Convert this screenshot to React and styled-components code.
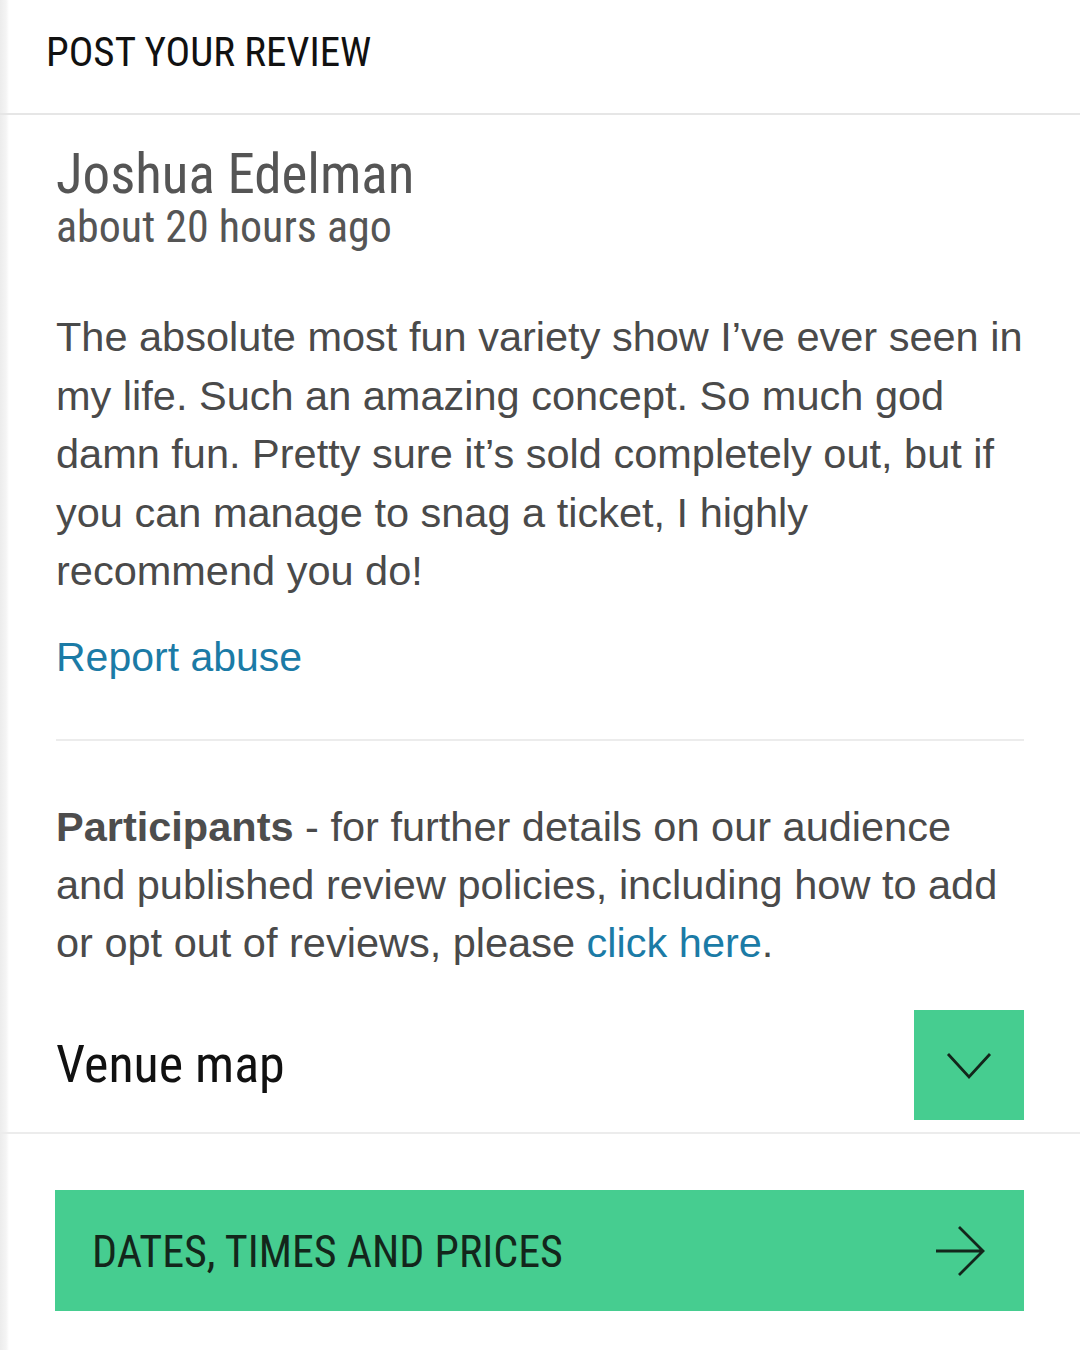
import React from "react";
import styled, { createGlobalStyle } from "styled-components";

const Global = createGlobalStyle`
  html, body { margin: 0; padding: 0; background: #ffffff; }
  body { width: 1080px; }
`;

const Page = styled.div`
  width: 1080px;
  min-height: 1350px;
  background: linear-gradient(to right, #ececec 0px, #f4f4f4 6px, #ffffff 9px);
  box-sizing: border-box;
`;

const Cond = styled.span`
  font-family: Roboto, "Liberation Sans", sans-serif;
  font-stretch: 75%;
`;

const Header = styled.header`
  height: 115px;
  display: flex;
  align-items: center;
  padding-left: 46px;
  padding-bottom: 10px;
  box-sizing: border-box;
  border-bottom: 2px solid #e6e6e6;
`;

const HeaderTitle = styled(Cond)`
  font-size: 41px;
  color: #111;
`;

const Section = styled.section`
  padding: 0 56px;
`;

const Name = styled(Cond)`
  display: block;
  margin-top: 30px;
  font-size: 55px;
  line-height: 58px;
  color: #555;
`;

const Time = styled(Cond)`
  display: block;
  font-size: 44px;
  line-height: 48px;
  color: #555;
`;

const Body = styled.p`
  margin: 57px 0 0;
  font-family: "Liberation Sans", Arial, sans-serif;
  font-size: 41.5px;
  line-height: 58.5px;
  color: #4a4a4a;
`;

const Link = styled.a`
  color: #1b7ba6;
  text-decoration: none;
`;

const ReportLine = styled.div`
  margin-top: 27px;
  font-family: "Liberation Sans", Arial, sans-serif;
  font-size: 41px;
  line-height: 58px;
`;

const Rule = styled.hr`
  margin: 53px 0 0;
  border: 0;
  height: 2px;
  background: #ececec;
`;

const Note = styled.p`
  margin: 57px 0 0;
  font-family: "Liberation Sans", Arial, sans-serif;
  font-size: 41.5px;
  line-height: 58px;
  color: #4a4a4a;
  b { font-weight: 700; color: #4d4d4d; }
`;

const VenueRow = styled.div`
  margin-top: 38px;
  display: flex;
  align-items: center;
  justify-content: space-between;
`;

const VenueTitle = styled(Cond)`
  font-size: 52px;
  color: #111;
`;

const ToggleBox = styled.div`
  width: 110px;
  height: 110px;
  background: #46cd90;
  display: flex;
  align-items: center;
  justify-content: center;
`;

const FullRule = styled.div`
  margin-top: 12px;
  height: 2px;
  background: #ececec;
`;

const CtaWrap = styled.div`
  padding: 56px 56px 0 55px;
`;

const Cta = styled.div`
  height: 121px;
  background: #46cd90;
  display: flex;
  align-items: center;
  justify-content: space-between;
  padding: 4px 38px 0 37px;
  box-sizing: border-box;
`;

const CtaText = styled(Cond)`
  font-size: 44px;
  color: #13261b;
`;

export default function App() {
  return (
    <Page>
      <Global />
      <Header>
        <HeaderTitle>POST YOUR REVIEW</HeaderTitle>
      </Header>
      <Section>
        <Name>Joshua Edelman</Name>
        <Time>about 20 hours ago</Time>
        <Body>
          The absolute most fun variety show I’ve ever seen in
          <br />
          my life. Such an amazing concept. So much god
          <br />
          damn fun. Pretty sure it’s sold completely out, but if
          <br />
          you can manage to snag a ticket, I highly
          <br />
          recommend you do!
        </Body>
        <ReportLine>
          <Link href="#">Report abuse</Link>
        </ReportLine>
        <Rule />
        <Note>
          <b>Participants</b> - for further details on our audience
          <br />
          and published review policies, including how to add
          <br />
          or opt out of reviews, please <Link href="#">click here</Link>.
        </Note>
        <VenueRow>
          <VenueTitle>Venue map</VenueTitle>
          <ToggleBox>
            <svg width="48" height="30" viewBox="0 0 48 30" fill="none">
              <path d="M3 4 L24 27 L45 4" stroke="#13261b" strokeWidth="2.8" />
            </svg>
          </ToggleBox>
        </VenueRow>
      </Section>
      <FullRule />
      <CtaWrap>
        <Cta>
          <CtaText>DATES, TIMES AND PRICES</CtaText>
          <svg width="52" height="52" viewBox="0 0 52 52" fill="none">
            <path d="M2 25 L49 25 M25 1 L49 25 L25 49" stroke="#13261b" strokeWidth="2.8" />
          </svg>
        </Cta>
      </CtaWrap>
    </Page>
  );
}
